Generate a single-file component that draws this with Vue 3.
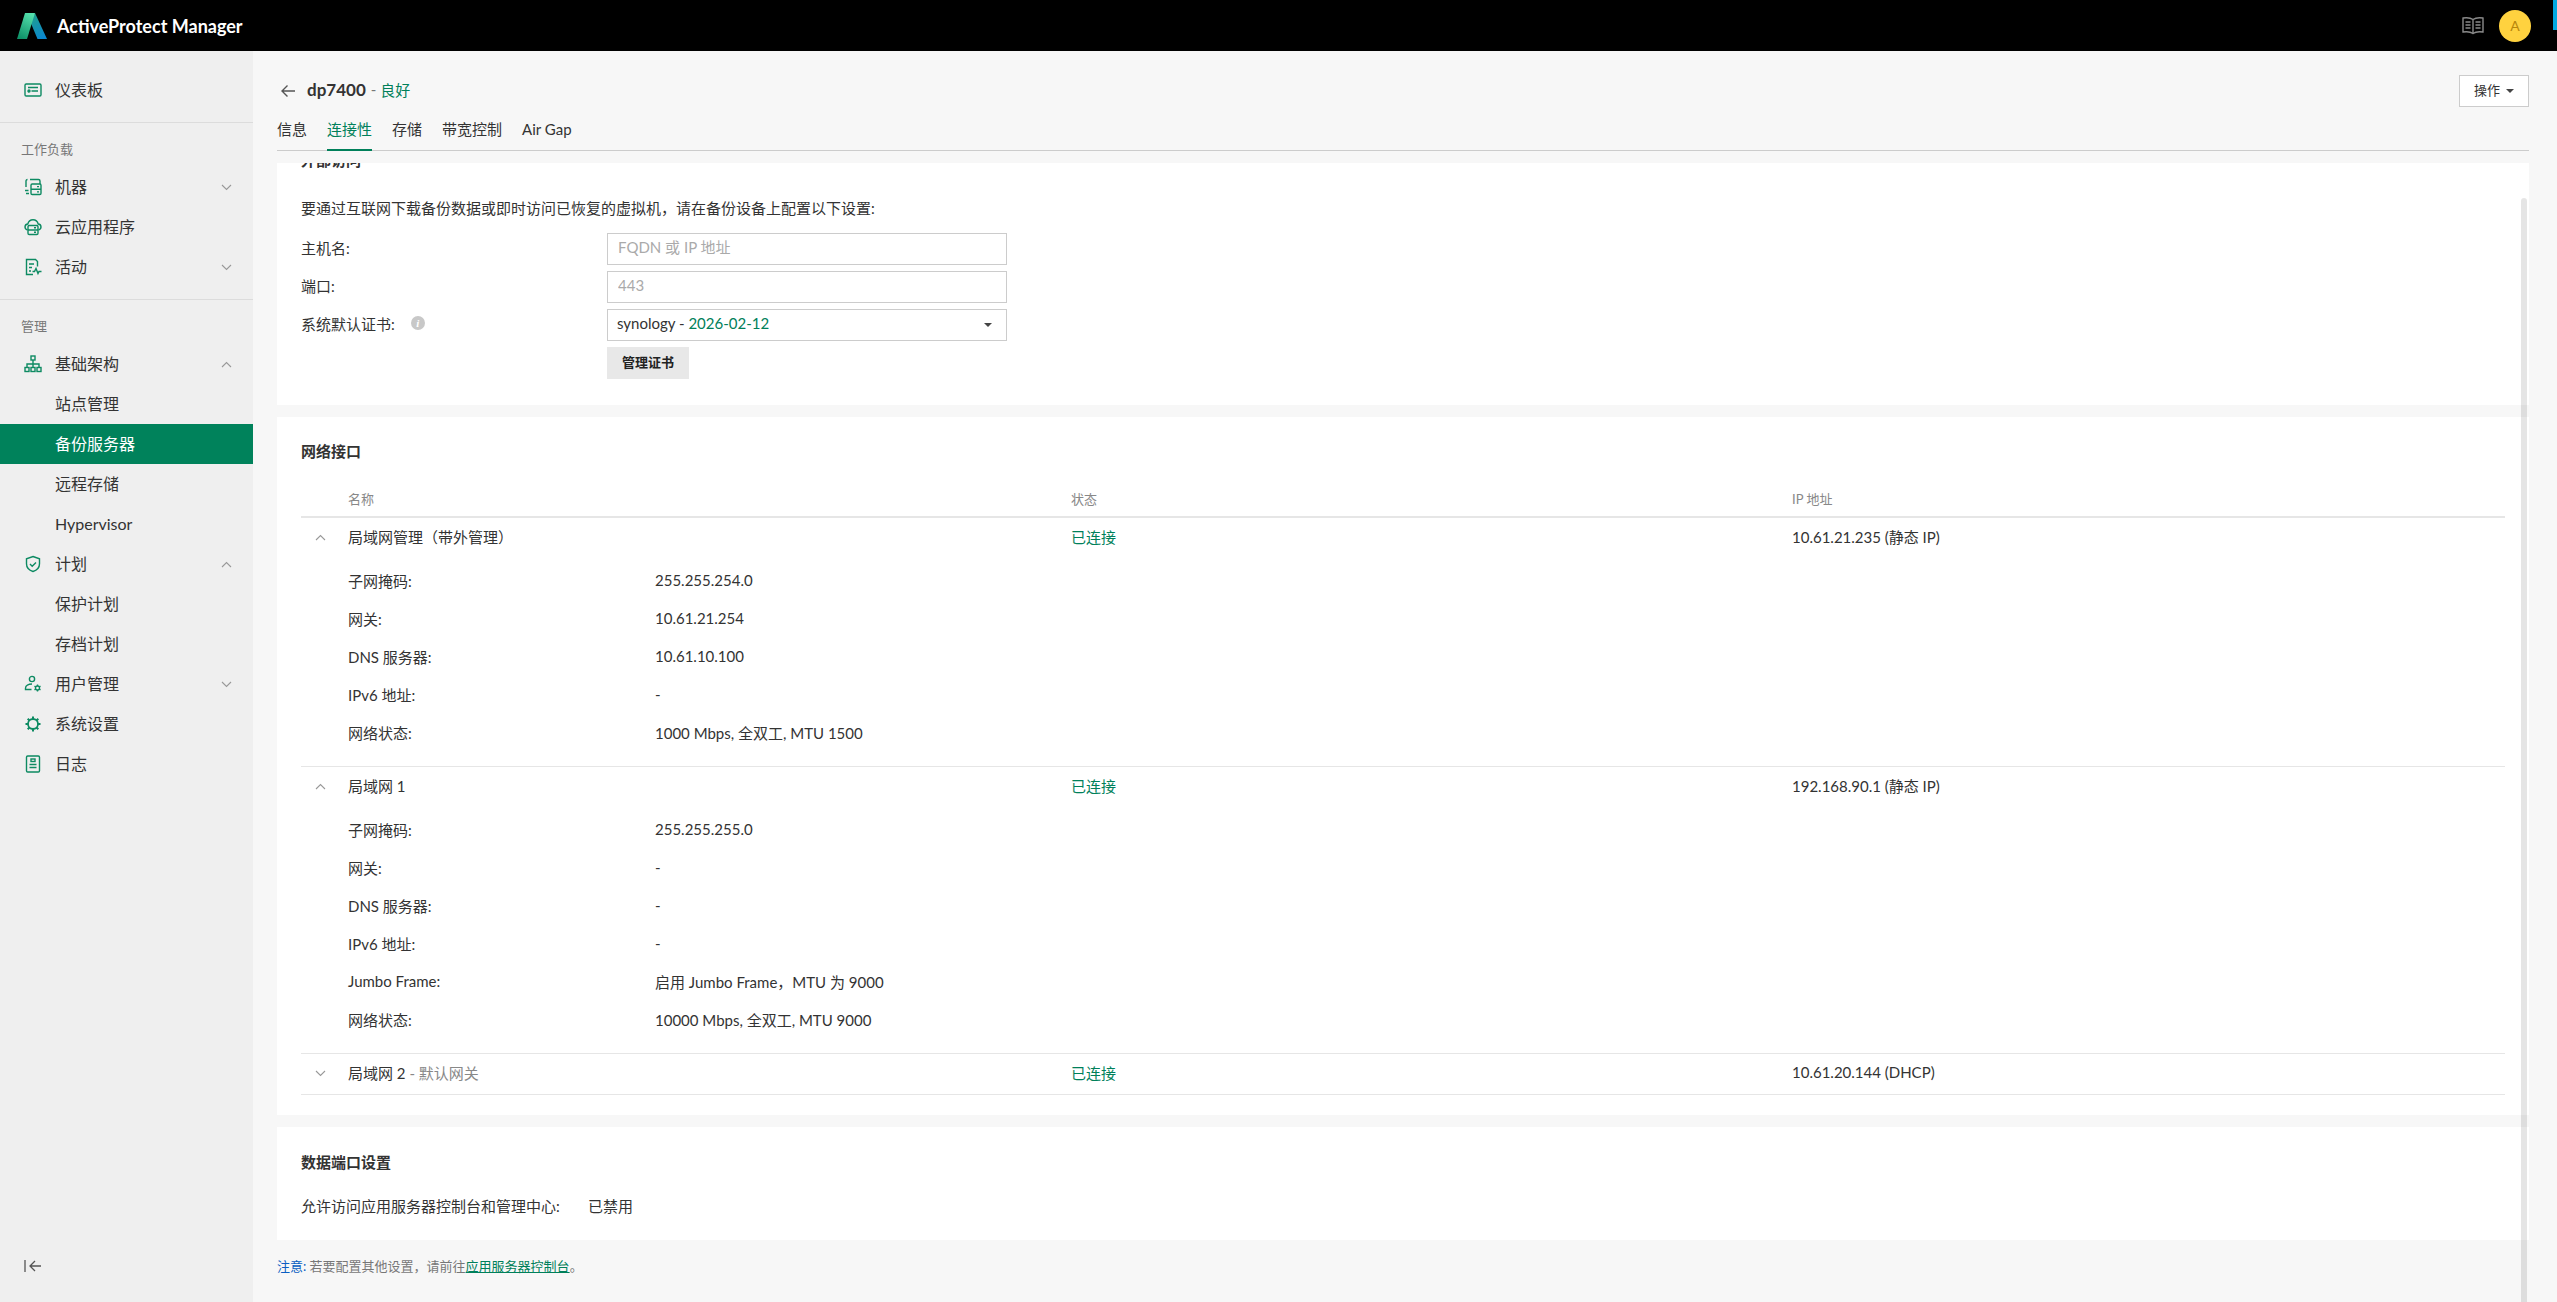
<template>
  <div class="app">
    <header class="topbar">
      <svg class="logo" width="30" height="26" viewBox="0 0 30 26">
        <defs>
          <linearGradient id="lg1" x1="0.7" y1="0" x2="0.3" y2="1">
            <stop offset="0" stop-color="#55e0ad" />
            <stop offset="1" stop-color="#0f9268" />
          </linearGradient>
          <linearGradient id="lg2" x1="0.3" y1="0" x2="0.7" y2="1">
            <stop offset="0" stop-color="#1f9f8c" />
            <stop offset="1" stop-color="#0a86cf" />
          </linearGradient>
        </defs>
        <polygon points="18,0 30,26 20.5,26 13,8" fill="url(#lg2)" />
        <polygon points="8,0 18,0 10,26 0,26" fill="url(#lg1)" />
      </svg>
      <span class="brand">ActiveProtect Manager</span>
      <svg class="book" width="22" height="20" viewBox="0 0 22 20" fill="none" stroke="#8a8a8a" stroke-width="1.4">
        <path d="M11 3.5C9 2 4.500 1.500 1 2v14c3.500-.5 8 0 10 1.500 2-1.500 6.500-2 10-1.500V2c-3.500-.5-8 0-10 1.500zM11 3.500v14" />
        <path d="M3.500 6h5M3.500 9h5M3.500 12h5M13.500 6h5M13.500 9h5M13.500 12h5" />
      </svg>
      <div class="avatar">A</div>
      <i class="edge"></i>
    </header>

    <div class="body">
      <aside class="sidebar">
        <template v-for="(group, g) in nav" :key="g">
          <div v-if="group.label" class="nav-label">{{ group.label }}</div>
          <a
            v-for="item in group.items"
            :key="item.text"
            class="nav-item"
            :class="{ sub: item.sub, active: item.active }"
          >
            <svg v-if="item.icon" class="nav-icon" width="18" height="18" viewBox="0 0 18 18" fill="none" stroke="#0d8a62" stroke-width="1.4">
              <template v-if="item.icon === 'dash'">
                <rect x="1" y="3" width="16" height="12" rx="1.2" />
                <path d="M4 6.500h10M7.500 10h6.500" />
                <circle cx="5" cy="10" r="1" fill="#0d8a62" />
              </template>
              <template v-else-if="item.icon === 'machine'">
                <path d="M6 1.500h8.500a1.500 1.500 0 0 1 1.500 1.500v3M2 9V3a1.500 1.500 0 0 1 1.500-1.500M1 12.500h3.500M2 15.500h3" />
                <rect x="7" y="6" width="10" height="10.500" rx="1.200" />
                <path d="M7 11.200h10M13 8.600h2M13 13.900h2" />
              </template>
              <template v-else-if="item.icon === 'cloud'">
                <path d="M3.500 12C1.800 11.500 1 10.300 1 9c0-1.600 1.200-2.900 2.800-3C4.400 3.600 6.500 1.700 9 1.700s4.600 1.900 5.200 4.300c1.600.1 2.800 1.400 2.800 3 0 1.300-.8 2.500-2.500 3" />
                <rect x="4" y="7.500" width="10" height="9" rx="1.200" />
                <path d="M4 12h10M10 9.800h2M10 14.300h2" />
              </template>
              <template v-else-if="item.icon === 'activity'">
                <path d="M9 16.500H2.500V1.500h9l2 2v5" />
                <path d="M5 6h5M5 9.500h3M5 13h2" />
                <path d="M8.500 13.500h2l1.500-3 2 5 1-2h2.500" />
              </template>
              <template v-else-if="item.icon === 'infra'">
                <rect x="7" y="1" width="4" height="4" />
                <path d="M9 5v4M3 12.500V9h12v3.500M9 9v3.500" />
                <rect x="1" y="12.500" width="4" height="4" />
                <rect x="7" y="12.500" width="4" height="4" />
                <rect x="13" y="12.500" width="4" height="4" />
              </template>
              <template v-else-if="item.icon === 'shield'">
                <path d="M9 1.500l6.500 2.300v5c0 3.700-2.600 6.500-6.500 7.700-3.900-1.200-6.500-4-6.500-7.700v-5z" />
                <path d="M6 9l2.200 2.200L12 7.500" />
              </template>
              <template v-else-if="item.icon === 'user'">
                <circle cx="8" cy="4" r="2.600" />
                <path d="M8 9c-3.500 0-6.500 1.500-6.500 4.200v1.300h6" />
                <circle cx="13.500" cy="13" r="2" />
                <path d="M13.500 9.500v1.500M13.500 15v1.500M10.500 11.200l1.300.8M15.200 14l1.300.8M16.500 11.200l-1.300.8M11.800 14l-1.300.8" />
              </template>
              <template v-else-if="item.icon === 'gear'">
                <circle cx="9" cy="9" r="5" stroke-width="1.800" />
                <path d="M9 1.500v2.500M9 14v2.500M1.500 9H4M14 9h2.500M3.700 3.700l1.800 1.800M12.500 12.500l1.800 1.800M14.300 3.700l-1.800 1.800M5.500 12.500l-1.800 1.800" stroke-width="2" />
              </template>
              <template v-else>
                <rect x="2.500" y="1" width="13" height="16" rx="1.200" />
                <rect x="7" y="4" width="4" height="2.500" />
                <path d="M5.500 9.500h7M5.500 12.500h7" />
              </template>
            </svg>
            <span class="lift">{{ item.text }}</span>
            <svg v-if="item.arrow" class="nav-chevron" width="11" height="7" viewBox="0 0 11 7" fill="none" stroke="#999" stroke-width="1.100">
              <path :d="item.arrow === 'up' ? 'M1 6l4.500-4.500L10 6' : 'M1 1l4.500 4.500L10 1'" />
            </svg>
          </a>
          <div v-if="group.divider" class="nav-divider"></div>
        </template>
        <svg class="collapse" width="18" height="14" viewBox="0 0 18 14" fill="none" stroke="#555" stroke-width="1.300">
          <path d="M1 1v12M17 7H6M11 2L6 7l5 5" />
        </svg>
      </aside>

      <main class="main">
        <div class="title-row">
          <svg class="back" width="16" height="14" viewBox="0 0 16 14" fill="none" stroke="#555" stroke-width="1.400">
            <path d="M15 7H2M7.500 1.500L2 7l5.500 5.500" />
          </svg>
          <h1 class="title lift-more">dp7400</h1>
          <span class="title-sep lift-more">-</span>
          <span class="green lift-more">良好</span>
          <button class="action"><span class="lift-more">操作</span><i class="caret"></i></button>
        </div>
        <nav class="tabs">
          <a v-for="tab in tabs" :key="tab" class="tab" :class="{ on: tab === '连接性' }">{{ tab }}</a>
        </nav>

        <div class="scroll">
          <section class="card card-ext">
            <h2 class="card-title">外部访问</h2>
            <p class="intro">要通过互联网下载备份数据或即时访问已恢复的虚拟机，请在备份设备上配置以下设置:</p>
            <div class="form-row">
              <label>主机名:</label>
              <input class="field" placeholder="FQDN 或 IP 地址" />
            </div>
            <div class="form-row">
              <label>端口:</label>
              <input class="field" placeholder="443" />
            </div>
            <div class="form-row">
              <label>系统默认证书:<i class="info">i</i></label>
              <div class="field select">
                <span class="lift-more">synology - <span class="green">2026-02-12</span></span>
                <i class="caret"></i>
              </div>
            </div>
            <div class="form-row">
              <label></label>
              <button class="manage"><span class="lift-more">管理证书</span></button>
            </div>
          </section>

          <section class="card card-net">
            <h2 class="card-title">网络接口</h2>
            <div class="net-grid net-head">
              <span></span><span>名称</span><span>状态</span><span>IP 地址</span>
            </div>
            <div v-for="net in networks" :key="net.name" class="net-item">
              <div class="net-grid net-row">
                <svg width="11" height="7" viewBox="0 0 11 7" fill="none" stroke="#999" stroke-width="1.100">
                  <path :d="net.details ? 'M1 6l4.500-4.500L10 6' : 'M1 1l4.500 4.500L10 1'" />
                </svg>
                <span class="lift">{{ net.name }}<span v-if="net.note" class="muted"> - {{ net.note }}</span></span>
                <span class="green lift">已连接</span>
                <span class="lift">{{ net.ip }}</span>
              </div>
              <div v-if="net.details" class="net-details">
                <div v-for="d in net.details" :key="d[0]" class="detail">
                  <span class="detail-key">{{ d[0] }}</span>
                  <span>{{ d[1] }}</span>
                </div>
              </div>
            </div>
          </section>

          <section class="card card-data">
            <h2 class="card-title">数据端口设置</h2>
            <div class="data-line">
              <span class="data-key">允许访问应用服务器控制台和管理中心:</span>
              <span>已禁用</span>
            </div>
          </section>
        </div>

        <p class="note"><span class="note-tag">注意:</span> 若要配置其他设置，请前往<a class="note-link">应用服务器控制台</a>。</p>
        <i class="scrollbar"></i>
      </main>
    </div>
  </div>
</template>

<script setup>
const nav = [
  { items: [{ text: '仪表板', icon: 'dash' }], divider: true },
  {
    label: '工作负载',
    divider: true,
    items: [
      { text: '机器', icon: 'machine', arrow: 'down' },
      { text: '云应用程序', icon: 'cloud' },
      { text: '活动', icon: 'activity', arrow: 'down' }
    ]
  },
  {
    label: '管理',
    items: [
      { text: '基础架构', icon: 'infra', arrow: 'up' },
      { text: '站点管理', sub: true },
      { text: '备份服务器', sub: true, active: true },
      { text: '远程存储', sub: true },
      { text: 'Hypervisor', sub: true },
      { text: '计划', icon: 'shield', arrow: 'up' },
      { text: '保护计划', sub: true },
      { text: '存档计划', sub: true },
      { text: '用户管理', icon: 'user', arrow: 'down' },
      { text: '系统设置', icon: 'gear' },
      { text: '日志', icon: 'log' }
    ]
  }
]

const tabs = ['信息', '连接性', '存储', '带宽控制', 'Air Gap']

const networks = [
  {
    name: '局域网管理（带外管理）',
    ip: '10.61.21.235 (静态 IP)',
    details: [
      ['子网掩码:', '255.255.254.0'],
      ['网关:', '10.61.21.254'],
      ['DNS 服务器:', '10.61.10.100'],
      ['IPv6 地址:', '-'],
      ['网络状态:', '1000 Mbps, 全双工, MTU 1500']
    ]
  },
  {
    name: '局域网 1',
    ip: '192.168.90.1 (静态 IP)',
    details: [
      ['子网掩码:', '255.255.255.0'],
      ['网关:', '-'],
      ['DNS 服务器:', '-'],
      ['IPv6 地址:', '-'],
      ['Jumbo Frame:', '启用 Jumbo Frame，MTU 为 9000'],
      ['网络状态:', '10000 Mbps, 全双工, MTU 9000']
    ]
  },
  { name: '局域网 2', note: '默认网关', ip: '10.61.20.144 (DHCP)' }
]
</script>

<style>
html, body {
  margin: 0;
  background: #f7f7f7;
}
</style>

<style scoped>
.app {
  height: 1302px;
  display: flex;
  flex-direction: column;
  overflow: hidden;
  font-family: Lato, "Noto Sans CJK SC", sans-serif;
  font-size: 15px;
  color: #333;
}
.lift {
  margin-bottom: 2px;
}
.lift-more {
  margin-bottom: 4px;
}

.topbar {
  height: 51px;
  flex: none;
  background: #000;
  display: flex;
  align-items: center;
  padding-left: 17px;
  position: relative;
}
.brand {
  margin-left: 10px;
  color: #fff;
  font-size: 18px;
  font-weight: 700;
}
.book {
  margin-left: auto;
  margin-right: 15px;
}
.avatar {
  width: 32px;
  height: 32px;
  border-radius: 50%;
  background: #ffd23f;
  color: #b8860b;
  font-size: 14px;
  display: flex;
  align-items: center;
  justify-content: center;
  margin-right: 26px;
}
.edge {
  position: absolute;
  right: 0;
  top: 0;
  width: 4px;
  height: 30px;
  background: #00a8e0;
}

.body {
  flex: 1;
  display: flex;
  min-height: 0;
}

.sidebar {
  width: 253px;
  flex: none;
  background: #efefef;
  padding-top: 19px;
  display: flex;
  flex-direction: column;
  box-sizing: border-box;
}
.nav-item {
  height: 40px;
  flex: none;
  display: flex;
  align-items: center;
  padding: 0 21px 0 24px;
  font-size: 16px;
  color: #333;
}
.nav-item.sub {
  padding-left: 55px;
}
.nav-item.active {
  background: #00825b;
  color: #fff;
}
.nav-icon {
  margin-right: 13px;
  flex: none;
}
.nav-chevron {
  margin-left: auto;
}
.nav-divider {
  height: 1px;
  flex: none;
  background: #dcdcdc;
  margin-top: 12px;
}
.nav-label {
  height: 26px;
  line-height: 26px;
  flex: none;
  margin: 13px 0 5px 21px;
  font-size: 13px;
  color: #777;
}
.collapse {
  margin: auto 0 29px 24px;
  flex: none;
}

.main {
  flex: 1;
  min-width: 0;
  padding: 0 28px 0 24px;
  display: flex;
  flex-direction: column;
  position: relative;
}
.title-row {
  height: 32px;
  margin-top: 24px;
  flex: none;
  display: flex;
  align-items: center;
}
.back {
  margin: 0 11px 0 3px;
}
.title {
  margin-top: 0;
  margin-left: 0;
  margin-right: 0;
  font-size: 17px;
  font-weight: 700;
}
.title-sep {
  margin-left: 5px;
  margin-right: 4px;
  color: #777;
}
.green {
  color: #00805a;
}
.action {
  margin-left: auto;
  width: 70px;
  height: 32px;
  background: #fff;
  border: 1px solid #ccc;
  font: inherit;
  font-size: 13px;
  color: #333;
  padding: 0;
  display: flex;
  align-items: center;
  justify-content: center;
}
.caret {
  display: inline-block;
  width: 0;
  height: 0;
  margin-left: 6px;
  border-left: 4px solid transparent;
  border-right: 4px solid transparent;
  border-top: 4px solid #444;
}
.tabs {
  height: 44px;
  flex: none;
  display: flex;
  gap: 20px;
  box-sizing: border-box;
  border-bottom: 1px solid #ccc;
}
.tab {
  height: 44px;
  box-sizing: border-box;
  padding-top: 11px;
  line-height: 22px;
  position: relative;
}
.tab.on {
  color: #00805a;
  border-bottom: 2px solid #00805a;
}

.scroll {
  margin-top: 12px;
  height: 1077px;
  flex: none;
  overflow: hidden;
}
.card {
  background: #fff;
  padding: 24px 24px 0;
  margin-bottom: 12px;
}
.card-title {
  margin: 0;
  font-size: 15px;
  line-height: 22px;
  font-weight: 700;
}
.card-ext {
  margin-top: -32px;
  padding-top: 18px;
  padding-bottom: 26px;
}
.intro {
  margin: 26px 0 14px;
  line-height: 22px;
}
.form-row {
  display: flex;
  align-items: center;
  margin-bottom: 6px;
}
.form-row:last-child {
  margin-bottom: 0;
}
.form-row label {
  width: 306px;
  flex: none;
  display: flex;
  align-items: center;
  padding-bottom: 4px;
  box-sizing: border-box;
}
.info {
  width: 14px;
  height: 14px;
  margin-left: 16px;
  border-radius: 50%;
  background: #c8c8c8;
  color: #fff;
  font-size: 11px;
  font-family: "Liberation Serif", serif;
  font-weight: 700;
  text-align: center;
  line-height: 14px;
}
.field {
  width: 400px;
  height: 32px;
  box-sizing: border-box;
  border: 1px solid #ccc;
  background: #fff;
  padding: 0 10px 4px;
  font: inherit;
  font-size: 15px;
  color: #333;
  border-radius: 0;
  outline: none;
}
.field::placeholder {
  color: #aaa;
  opacity: 1;
}
.select {
  display: flex;
  align-items: center;
  justify-content: space-between;
  padding: 0 14px 0 9px;
}
.manage {
  width: 82px;
  height: 32px;
  border: none;
  background: #e8e8e8;
  padding: 0;
  font: inherit;
  font-size: 13px;
  font-weight: 700;
  color: #222;
  display: flex;
  align-items: center;
  justify-content: center;
}

.card-net {
  padding-top: 23px;
  padding-bottom: 20px;
}
.net-grid {
  display: grid;
  grid-template-columns: 47px 723px 721px 1fr;
  align-items: center;
}
.net-head {
  height: 36px;
  margin-top: 18px;
  border-bottom: 2px solid #e6e6e6;
  font-size: 13px;
  color: #888;
}
.net-item {
  border-bottom: 1px solid #e6e6e6;
}
.net-row {
  height: 38px;
  padding-bottom: 2px;
}
.net-row svg {
  margin-left: 14px;
}
.muted {
  color: #888;
}
.net-details {
  padding: 3px 0 15px 47px;
}
.detail {
  height: 38px;
  display: flex;
  align-items: center;
}
.detail-key {
  width: 307px;
  flex: none;
}

.card-data {
  margin-bottom: 0;
  padding-top: 24px;
  padding-bottom: 23px;
}
.data-line {
  margin-top: 22px;
  line-height: 22px;
  display: flex;
}
.data-key {
  width: 287px;
  flex: none;
}

.note {
  margin: 0;
  padding-top: 17px;
  font-size: 13px;
  line-height: 18px;
  color: #777;
}
.note-tag {
  color: #0a5ec2;
}
.note-link {
  color: #00805a;
  text-decoration: underline;
}
.scrollbar {
  position: absolute;
  left: 2268px;
  top: 147px;
  bottom: 0;
  width: 6px;
  border-radius: 3px 3px 0 0;
  background: rgba(0, 0, 0, 0.1);
}
</style>
